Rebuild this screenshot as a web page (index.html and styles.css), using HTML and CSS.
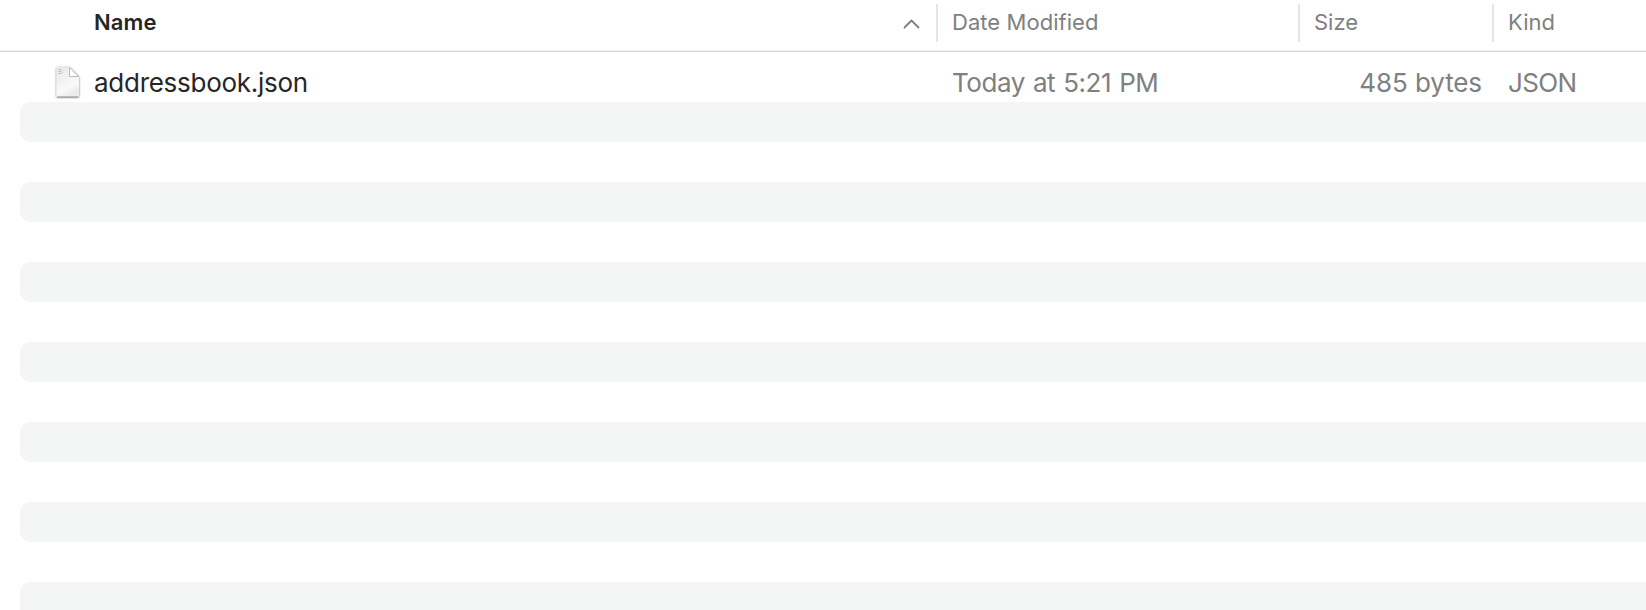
FILE: index.html
```html
<!DOCTYPE html>
<html lang="en">
<head>
<meta charset="utf-8">
<title>Files</title>
<link rel="stylesheet" href="styles.css">
</head>
<body>
<main class="browser">
  <header class="columns header">
    <div class="cell name"><span class="label-name">Name</span>
      <svg class="sort" width="18" height="12" viewBox="0 0 18 12"><path d="M2.500 9.500 9.500 2.500 16.500 9.500" fill="none" stroke="#808080" stroke-width="1.800" stroke-linecap="round" stroke-linejoin="round"/></svg>
    </div>
    <div class="cell divided"><span class="label-date">Date Modified</span></div>
    <div class="cell divided"><span class="label-size">Size</span></div>
    <div class="cell divided"><span class="label-kind">Kind</span></div>
  </header>
  <section class="list">
    <div class="columns row">
      <div class="cell name">
        <svg class="file-icon" width="30" height="36" viewBox="0 0 30 36">
          <defs>
            <linearGradient id="paper" x1="0" y1="0" x2=".4" y2="1"><stop offset="0" stop-color="#e9e9e9"/><stop offset=".4" stop-color="#f0f0f0"/><stop offset=".75" stop-color="#fafafa"/><stop offset="1" stop-color="#ececec"/></linearGradient>
            <filter id="shade" x="-20%" y="-20%" width="140%" height="140%"><feDropShadow dx="0" dy=".3" stdDeviation=".8" flood-opacity=".55"/></filter>
          </defs>
          <path d="M4.500 1.500H17L26 10.500V31H3.500V2.500Q3.500 1.500 4.500 1.500Z" fill="url(#paper)" filter="url(#shade)"/>
          <path d="M4 31H25.500" stroke="#8c8c8c" stroke-width="1"/>
          <path d="M16.500 1.500V10.500H25.500Z" fill="#fff" stroke="#b4b4b4" stroke-width=".9"/>
          <path d="M5.500 3.500H8M5.500 5.500H8M5.500 7.500H8M8.500 4.500H9.500M8.500 6.500H9.500" stroke="#b8b8b8" stroke-width="1"/>
        </svg>
        <span class="file-name">addressbook.json</span>
      </div>
      <div class="cell"><span class="file-date">Today at 5:21 PM</span></div>
      <div class="cell size"><span class="file-size">485 bytes</span></div>
      <div class="cell"><span class="file-kind">JSON</span></div>
    </div>
    <div class="stripe"></div>
    <div class="stripe"></div>
    <div class="stripe"></div>
    <div class="stripe"></div>
    <div class="stripe"></div>
    <div class="stripe"></div>
    <div class="stripe"></div>
  </section>
</main>
</body>
</html>
```
FILE: styles.css
```css
* { box-sizing: border-box; }
body { margin: 0; background: #fff; font-family: Inter, "Liberation Sans", sans-serif; color: #808080; }
.browser { height: 610px; overflow: hidden; }
.columns { display: grid; grid-template-columns: 936px 362px 194px 1fr; white-space: nowrap; }
.header { height: 52px; padding-top: 4px; border-bottom: 1px solid #d9d9d9; box-shadow: inset 0 -1px #ededed; font-size: 22px; line-height: 36px; }
.cell { height: 38px; padding-left: 16px; }
.divided { border-left: 2px solid #e5e5e5; padding-left: 14px; }
.header .name { display: flex; justify-content: space-between; align-items: flex-start; padding: 0 16px 0 94px; color: #262626; font-weight: 600; }
.label-name { letter-spacing: .1px; }
.label-date { letter-spacing: .05px; }
.sort { margin-top: 14px; }
.list { padding-top: 10px; }
.row { height: 40px; font-size: 26px; line-height: 42px; }
.row .name { display: flex; padding-left: 53px; color: #262626; }
.row .size { padding: 0 10px 0 0; text-align: right; }
.file-name { letter-spacing: -.27px; }
.file-date { letter-spacing: -.45px; word-spacing: 1.2px; }
.file-size { letter-spacing: -.1px; }
.file-kind { letter-spacing: -.6px; }
.file-icon { flex: none; margin: 4px 11px 0 0; }
.stripe { height: 40px; margin: 0 0 40px 20px; border-radius: 10px 0 0 10px; background: #f4f5f5; }
```
